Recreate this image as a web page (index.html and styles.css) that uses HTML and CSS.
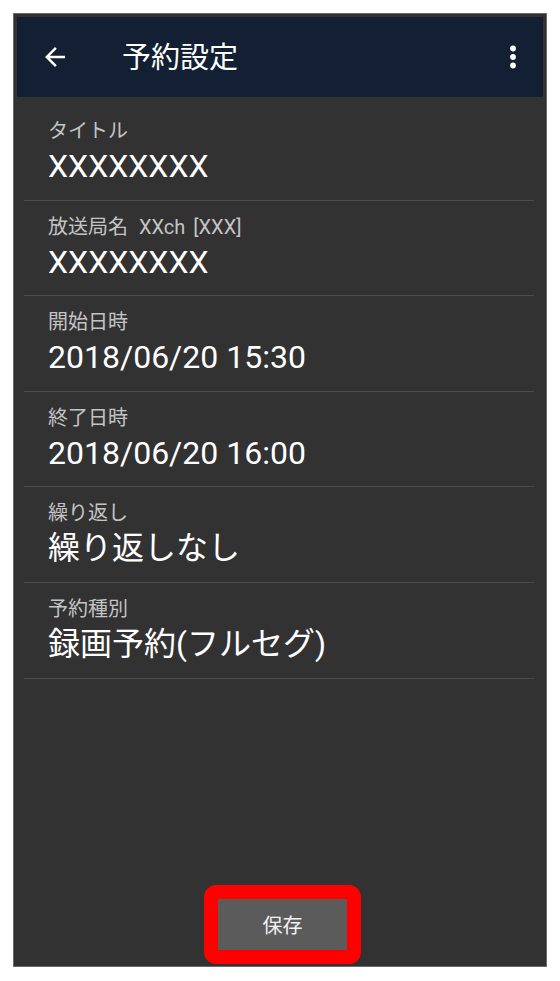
FILE: index.html
```html
<!DOCTYPE html>
<html lang="ja">
<head>
<meta charset="utf-8">
<link rel="stylesheet" href="styles.css">
</head>
<body>
<div class="frame">
  <header class="appbar">
    <svg class="back" width="30" height="30" viewBox="0 0 24 24"><path d="M20 11H7.83l5.59-5.59L12 4l-8 8 8 8 1.41-1.41L7.83 13H20v-2z" fill="#fff"/></svg>
    <h1 class="title">予約設定</h1>
    <svg class="more" width="10" height="26" viewBox="0 0 10 26"><circle cx="5" cy="4.5" r="2.9" fill="#fff"/><circle cx="5" cy="13" r="2.9" fill="#fff"/><circle cx="5" cy="21.5" r="2.9" fill="#fff"/></svg>
  </header>
  <ul class="list">
    <li class="item"><div class="label">タイトル</div><div class="value">XXXXXXXX</div></li>
    <li class="item"><div class="label">放送局名<span class="station">XXch [XXX]</span></div><div class="value">XXXXXXXX</div></li>
    <li class="item"><div class="label">開始日時</div><div class="value">2018/06/20 15:30</div></li>
    <li class="item"><div class="label">終了日時</div><div class="value">2018/06/20 16:00</div></li>
    <li class="item"><div class="label">繰り返し</div><div class="value">繰り返しなし</div></li>
    <li class="item"><div class="label">予約種別</div><div class="value">録画予約(フルセグ)</div></li>
  </ul>
  <div class="footer">
    <span class="highlight"><button class="save">保存</button></span>
  </div>
</div>
</body>
</html>
```
FILE: styles.css
```css
html, body {
  margin: 0;
  padding: 0;
  background: #fff;
}
body {
  font-family: Roboto, "Noto Sans CJK JP", sans-serif;
  padding: 13px 0 0 13px;
}
.frame {
  width: 526px;
  height: 947px;
  border: 1px solid #6a6a6a;
  padding: 3px 3px 2px 3px;
  background: #323232;
  display: flex;
  flex-direction: column;
}
.appbar {
  height: 80px;
  background: #131f33;
  display: flex;
  align-items: center;
  flex-shrink: 0;
}
.back {
  margin-left: 23px;
  flex-shrink: 0;
}
.title {
  margin: 0 0 0 52px;
  font-weight: 400;
  font-size: 29px;
  color: #fff;
  flex: 1;
  line-height: 1;
  position: relative;
  top: 1px;
}
.more {
  margin-right: 25px;
}
.list {
  list-style: none;
  margin: 0 9px 0 7px;
  padding: 8px 0 0 0;
}
.item {
  padding: 13px 0 13.6px 24px;
  border-bottom: 1px solid #4c4c4c;
  height: 68px;
}
.label {
  font-size: 20px;
  line-height: 26px;
  color: #c4c4c4;
}
.station {
  margin-left: 11px;
  word-spacing: 3px;
}
.value {
  margin-top: 2px;
  font-size: 32px;
  line-height: 40px;
  color: #fff;
}
.footer {
  margin-top: auto;
  display: flex;
  justify-content: center;
  padding-left: 5px;
}
.highlight {
  display: block;
  border: 14px solid #ff0000;
  border-radius: 12px;
}
.save {
  display: block;
  width: 129px;
  height: 51px;
  border: 0;
  margin: 0;
  background: #5b5b5b;
  color: #f2f2f2;
  font-family: Roboto, "Noto Sans CJK JP", sans-serif;
  font-size: 20px;
}
```
